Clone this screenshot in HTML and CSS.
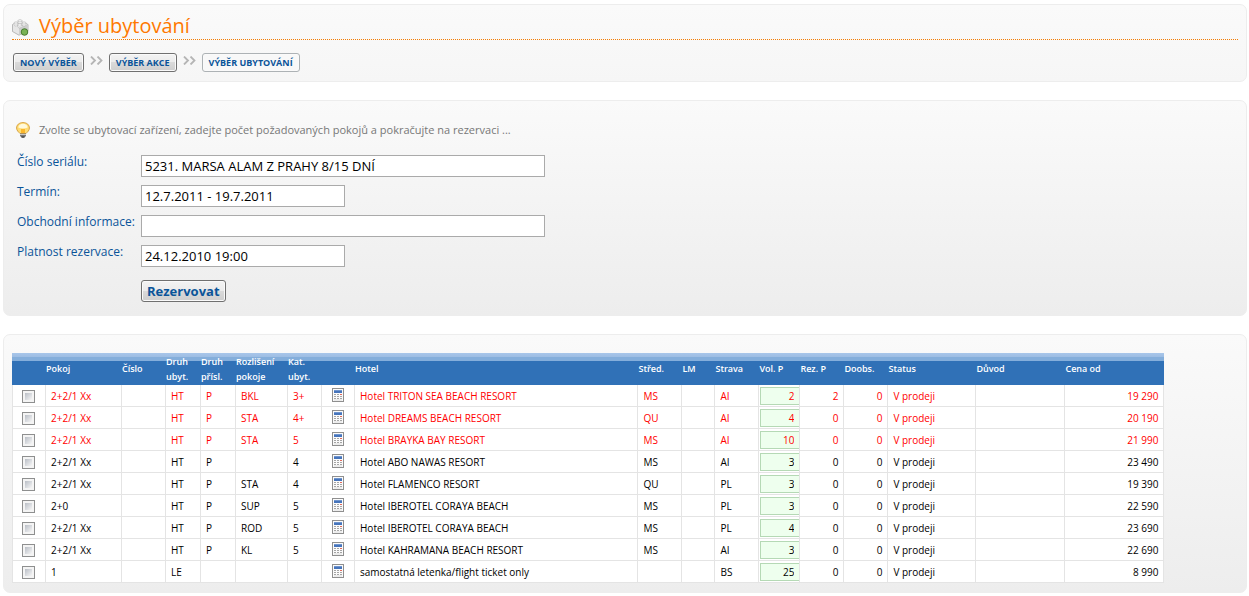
FILE: index.html
```html
<!DOCTYPE html>
<html lang="cs">
<head>
<meta charset="utf-8">
<title>Výběr ubytování</title>
<link rel="stylesheet" href="styles.css">
</head>
<body>
<svg class="sprite" aria-hidden="true">
  <symbol id="calc" viewBox="0 0 12 14">
    <rect x=".5" y=".5" width="11" height="13" fill="#fbfbfb" stroke="#8f8f8f"/>
    <path d="M2 2h8v3H2z" fill="#4674bb"/><path d="M2 2h8v1H2z" fill="#6f95cf"/>
    <path d="M2 6.500h8M2 8.500h8M2 10.500h8" stroke="#a5a5a5" stroke-dasharray="2 1"/>
    <path d="M8 6.500h2" stroke="#e06a5c"/><path d="M2 12h8" stroke="#ddd"/>
  </symbol>
  <symbol id="next" viewBox="0 0 13 9">
    <path d="M1 .5 5 4.500 1 8.500M7.500 .5l4 4-4 4" fill="none" stroke="#b5b5b5" stroke-width="1.800"/>
  </symbol>
</svg>

<header class="panel head">
  <div class="title">
    <svg class="brick" viewBox="0 0 17 17" aria-hidden="true">
      <path d="M.5 5.500 8 2.500l8 3v6.500L7 16.200.5 12.500z" fill="#e6e6e6" stroke="#aaa" stroke-width=".8"/>
      <path d="M.8 5.700 7 9l8.500-3.500L8 2.500z" fill="#fafafa"/>
      <path d="M7 9v7l8.500-4V5.500z" fill="#cdcdcd"/>
      <g fill="#fcfcfc" stroke="#aaa" stroke-width=".6"><path d="M6 1.800v2c0 1.400 4 1.400 4 0v-2"/><ellipse cx="8" cy="1.800" rx="2" ry="1.100"/><path d="M2 4v2c0 1.400 4 1.400 4 0V4"/><ellipse cx="4" cy="4" rx="2" ry="1.100"/><path d="M10 4v2c0 1.400 4 1.400 4 0V4"/><ellipse cx="12" cy="4" rx="2" ry="1.100"/><path d="M5.500 6v1.800c0 1.400 4.500 1.400 4.500 0V6"/><ellipse cx="7.700" cy="6" rx="2.200" ry="1.200"/></g>
      <circle cx="12.500" cy="13" r="3.300" fill="#79b255" stroke="#477a31"/>
    </svg>
    <h1>Výběr ubytování</h1>
  </div>
  <nav class="steps" aria-label="Kroky">
    <button type="button" class="btn step">NOVÝ VÝBĚR</button>
    <svg class="next" aria-hidden="true"><use href="#next"/></svg>
    <button type="button" class="btn step">VÝBĚR AKCE</button>
    <svg class="next" aria-hidden="true"><use href="#next"/></svg>
    <button type="button" class="btn step current">VÝBĚR UBYTOVÁNÍ</button>
  </nav>
</header>

<section class="panel booking">
  <p class="hint">
    <svg class="bulb" viewBox="0 0 14 16" aria-hidden="true">
      <path d="M7 .6C3 .6.6 3 .6 6c0 2.500 2 4 3.400 5.500h6C11.400 10 13.400 8.500 13.400 6 13.400 3 11 .6 7 .6z" fill="#ffdc73" stroke="#d7a348"/>
      <path d="M2.300 5.500C2.500 3 4.500 1.700 7 1.700S11.500 3 11.700 5.500C9 6.800 5 6.800 2.300 5.500z" fill="#fff9db"/>
      <path d="M5 7v4.500h4V7z" fill="#fbb72c"/>
      <path d="M4 11.500h6V14l-2 1.700H6L4 14z" fill="#777"/><path d="M4 12.500h6" stroke="#c8c8c8"/><path d="M5.500 15h3" stroke="#333"/>
    </svg>
    Zvolte se ubytovací zařízení, zadejte počet požadovaných pokojů a pokračujte na rezervaci ...
  </p>
  <form class="fields">
    <label for="serial">Číslo seriálu:</label><input id="serial" class="wide" type="text" value="5231. MARSA ALAM Z PRAHY 8/15 DNÍ">
    <label for="term">Termín:</label><input id="term" type="text" value="12.7.2011 - 19.7.2011">
    <label for="info">Obchodní informace:</label><input id="info" class="wide" type="text">
    <label for="valid">Platnost rezervace:</label><input id="valid" type="text" value="24.12.2010 19:00">
    <button type="button" class="btn reserve">Rezervovat</button>
  </form>
</section>

<main class="panel list">
<table>
<colgroup><col class="c33"><col class="c76"><col class="c44"><col class="c35"><col class="c35"><col class="c52"><col class="c34"><col class="c33"><col><col class="c44"><col class="c33"><col class="c44"><col class="c41"><col class="c44"><col class="c44"><col class="c88"><col class="c89"><col class="c100"></colgroup>
<thead><tr><th></th><th>Pokoj</th><th>Číslo</th><th>Druh ubyt.</th><th>Druh přísl.</th><th>Rozlišení pokoje</th><th>Kat. ubyt.</th><th></th><th>Hotel</th><th>Střed.</th><th>LM</th><th>Strava</th><th>Vol. P</th><th>Rez. P</th><th>Doobs.</th><th>Status</th><th>Důvod</th><th>Cena od</th></tr></thead>
<tbody>
<tr class="hot"><td class="pick"><input type="checkbox" aria-label="Vybrat pokoj 1"></td><td>2+2/1 Xx</td><td></td><td>HT</td><td>P</td><td>BKL</td><td>3+</td><td class="pick"><svg class="calc"><use href="#calc"/></svg></td><td>Hotel TRITON SEA BEACH RESORT</td><td>MS</td><td></td><td>AI</td><td class="free"><input type="text" aria-label="Volné pokoje 1" value="2"></td><td class="num">2</td><td class="num">0</td><td>V prodeji</td><td></td><td class="num">19 290</td></tr>
<tr class="hot"><td class="pick"><input type="checkbox" aria-label="Vybrat pokoj 2"></td><td>2+2/1 Xx</td><td></td><td>HT</td><td>P</td><td>STA</td><td>4+</td><td class="pick"><svg class="calc"><use href="#calc"/></svg></td><td>Hotel DREAMS BEACH RESORT</td><td>QU</td><td></td><td>AI</td><td class="free"><input type="text" aria-label="Volné pokoje 2" value="4"></td><td class="num">0</td><td class="num">0</td><td>V prodeji</td><td></td><td class="num">20 190</td></tr>
<tr class="hot"><td class="pick"><input type="checkbox" aria-label="Vybrat pokoj 3"></td><td>2+2/1 Xx</td><td></td><td>HT</td><td>P</td><td>STA</td><td>5</td><td class="pick"><svg class="calc"><use href="#calc"/></svg></td><td>Hotel BRAYKA BAY RESORT</td><td>MS</td><td></td><td>AI</td><td class="free"><input type="text" aria-label="Volné pokoje 3" value="10"></td><td class="num">0</td><td class="num">0</td><td>V prodeji</td><td></td><td class="num">21 990</td></tr>
<tr><td class="pick"><input type="checkbox" aria-label="Vybrat pokoj 4"></td><td>2+2/1 Xx</td><td></td><td>HT</td><td>P</td><td></td><td>4</td><td class="pick"><svg class="calc"><use href="#calc"/></svg></td><td>Hotel ABO NAWAS RESORT</td><td>MS</td><td></td><td>AI</td><td class="free"><input type="text" aria-label="Volné pokoje 4" value="3"></td><td class="num">0</td><td class="num">0</td><td>V prodeji</td><td></td><td class="num">23 490</td></tr>
<tr><td class="pick"><input type="checkbox" aria-label="Vybrat pokoj 5"></td><td>2+2/1 Xx</td><td></td><td>HT</td><td>P</td><td>STA</td><td>4</td><td class="pick"><svg class="calc"><use href="#calc"/></svg></td><td>Hotel FLAMENCO RESORT</td><td>QU</td><td></td><td>PL</td><td class="free"><input type="text" aria-label="Volné pokoje 5" value="3"></td><td class="num">0</td><td class="num">0</td><td>V prodeji</td><td></td><td class="num">19 390</td></tr>
<tr><td class="pick"><input type="checkbox" aria-label="Vybrat pokoj 6"></td><td>2+0</td><td></td><td>HT</td><td>P</td><td>SUP</td><td>5</td><td class="pick"><svg class="calc"><use href="#calc"/></svg></td><td>Hotel IBEROTEL CORAYA BEACH</td><td>MS</td><td></td><td>PL</td><td class="free"><input type="text" aria-label="Volné pokoje 6" value="3"></td><td class="num">0</td><td class="num">0</td><td>V prodeji</td><td></td><td class="num">22 590</td></tr>
<tr><td class="pick"><input type="checkbox" aria-label="Vybrat pokoj 7"></td><td>2+2/1 Xx</td><td></td><td>HT</td><td>P</td><td>ROD</td><td>5</td><td class="pick"><svg class="calc"><use href="#calc"/></svg></td><td>Hotel IBEROTEL CORAYA BEACH</td><td>MS</td><td></td><td>PL</td><td class="free"><input type="text" aria-label="Volné pokoje 7" value="4"></td><td class="num">0</td><td class="num">0</td><td>V prodeji</td><td></td><td class="num">23 690</td></tr>
<tr><td class="pick"><input type="checkbox" aria-label="Vybrat pokoj 8"></td><td>2+2/1 Xx</td><td></td><td>HT</td><td>P</td><td>KL</td><td>5</td><td class="pick"><svg class="calc"><use href="#calc"/></svg></td><td>Hotel KAHRAMANA BEACH RESORT</td><td>MS</td><td></td><td>AI</td><td class="free"><input type="text" aria-label="Volné pokoje 8" value="3"></td><td class="num">0</td><td class="num">0</td><td>V prodeji</td><td></td><td class="num">22 690</td></tr>
<tr><td class="pick"><input type="checkbox" aria-label="Vybrat pokoj 9"></td><td>1</td><td></td><td>LE</td><td></td><td></td><td></td><td class="pick"><svg class="calc"><use href="#calc"/></svg></td><td>samostatná letenka/flight ticket only</td><td></td><td></td><td>BS</td><td class="free"><input type="text" aria-label="Volné pokoje 9" value="25"></td><td class="num">0</td><td class="num">0</td><td>V prodeji</td><td></td><td class="num">8 990</td></tr>
</tbody>
</table>
</main>
</body>
</html>
```

FILE: styles.css
```css
* { box-sizing: border-box; }
body {
  margin: 0;
  padding: 4px 2px 3px 3px;
  display: flex;
  flex-direction: column;
  gap: 18px;
  background: #fff;
  font: 12px/16px "Trebuchet MS", "Open Sans", "Noto Sans", sans-serif;
}
.sprite { display: none; }
input, button { font: inherit; margin: 0; }
.panel {
  border: 1px solid #ededed;
  border-radius: 7px;
  background: linear-gradient(#fafafa, #ededed);
}
.head { padding: 7px 8px 9px; background: linear-gradient(#fafafa, #f6f6f6); }
.title {
  display: flex;
  align-items: center;
  gap: 10px;
  height: 28px;
  border-bottom: 1px dotted #f47b00;
}
.brick { width: 17px; height: 17px; margin-top: 3px; }
h1 { margin: 0; font-size: 20px; line-height: 26px; font-weight: 400; color: #ff7800; }
.steps { display: flex; align-items: center; margin-top: 13px; padding-left: 1px; gap: 6px; }
.next { width: 13px; height: 9px; margin-bottom: 4px; }
.btn {
  border: 1px solid #707070;
  border-radius: 3px;
  background: linear-gradient(#f3f3f3, #ebebeb 50%, #dadada 50%, #cecece);
  box-shadow: inset 0 0 0 1px #fafafa;
  color: #0a5499;
  font-weight: 700;
}
.step { height: 19px; padding: 0 6px; font-size: 9px; line-height: 16px; }
.current { border-color: #adb2b5; background: #f8f8f8; }

.booking { padding: 21px 12px 13px; }
.hint { display: flex; align-items: center; gap: 9px; margin: 0 0 17px; color: #777; font-size: 11px; }
.bulb { width: 14px; height: 16px; }
.fields {
  display: grid;
  grid-template-columns: 116px minmax(0, 404px);
  column-gap: 8px;
  row-gap: 8px;
  padding-left: 1px;
}
.fields label { color: #0a5499; line-height: 14px; white-space: nowrap; }
.fields input {
  width: 204px;
  height: 22px;
  padding: 0 3px;
  border: 1px solid #aaa;
  border-radius: 0;
  background: #fff;
  color: #000;
  font-size: 13px;
}
.fields .wide { width: 100%; }
.reserve { grid-column: 2; justify-self: start; height: 22px; margin-top: 5px; padding: 0 5px; line-height: 18px; font-size: 13px; }

.list { padding: 18px 8px 9px; }
table {
  width: 94%;
  table-layout: fixed;
  border-collapse: separate;
  border-spacing: 0;
  font-size: 10px;
}
.c33 { width: 33px; } .c34 { width: 34px; } .c35 { width: 35px; } .c41 { width: 41px; }
.c44 { width: 44px; } .c52 { width: 52px; } .c76 { width: 76px; } .c88 { width: 88px; }
.c89 { width: 89px; } .c100 { width: 100px; }
thead tr { background: linear-gradient(#a8c6ea 0, #9dbde3 4px, #84aedb 4px, #84aedb 8px, #3071b7 8px); }
th {
  height: 32px;
  padding: 0 0 1px 1px;
  color: #fff;
  font-weight: 600;
  font-size: 9px;
  line-height: 15px;
  text-align: left;
}
td {
  height: 22px;
  padding: 0 0 0 5px;
  background: #fff;
  border: solid #e4e4e4;
  border-width: 0 0 1px 1px;
  color: #000;
  line-height: 16px;
  white-space: nowrap;
}
td:last-child { border-right-width: 1px; }
.hot td, .hot input { color: #f00; }
.num { padding-right: 5px; text-align: right; }
.pick { padding: 0 1px 0 0; text-align: center; }
.pick > * { vertical-align: middle; }
.pick input {
  appearance: none;
  width: 13px;
  height: 13px;
  border: 1px solid #8e8f8f;
  background: linear-gradient(135deg, #b9bec6, #f6f6f6) content-box, #f4f4f4;
  padding: 2px;
}
.calc { width: 12px; height: 14px; margin-bottom: 2px; }
.free { padding: 0 0 0 1px; }
.free input {
  display: block;
  width: 100%;
  height: 18px;
  padding: 0 5px;
  border: 1px solid #b5d9b5;
  border-right: 0;
  border-radius: 0;
  background: #eeffee;
  text-align: right;
}
```
